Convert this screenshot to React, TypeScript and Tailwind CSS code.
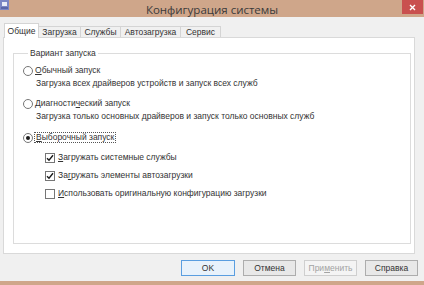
import React from "react";

function Radio({ checked }: { checked?: boolean }) {
  return (
    <span className="w-[10px] h-[10px] rounded-full border border-[#767676] bg-white flex items-center justify-center shrink-0">
      {checked && <span className="w-[4px] h-[4px] rounded-full bg-[#1a1a1a]" />}
    </span>
  );
}

function Check({ checked }: { checked?: boolean }) {
  return (
    <span className="w-[10px] h-[10px] border border-[#767676] bg-white flex items-center justify-center shrink-0">
      {checked && (
        <svg width="8" height="8" viewBox="0 0 8 8">
          <path d="M1 4.2 L3 6.2 L7 1.3" fill="none" stroke="#1a1a1a" strokeWidth="1.4" />
        </svg>
      )}
    </span>
  );
}

export default function App() {
  return (
    <div className="w-[424px] h-[285px] bg-[#f0f0f0] flex flex-col overflow-hidden font-['Liberation_Sans',Arial,sans-serif] text-[#333333]">
      {/* title bar */}
      <div className="h-[17px] bg-[#cfa68a] grid grid-cols-[22px_1fr_22px] shrink-0">
        <div className="flex items-start">
          <svg width="9" height="10" viewBox="0 0 9 10">
            <rect x="0" y="0" width="9" height="10" fill="#7b86c4" />
            <rect x="2" y="2" width="5" height="4" fill="#e9ecf7" />
            <rect x="1" y="7" width="7" height="2" fill="#5a66a8" />
          </svg>
        </div>
        <div className="text-center text-[11.5px] leading-[19px] text-[#3a3a3a] font-['Open_Sans',sans-serif]">
          Конфигурация системы
        </div>
        <div className="flex justify-end">
          <div className="w-[21px] h-[14px] bg-[#c9504f] flex items-center justify-center mr-[1px]">
            <svg width="7" height="7" viewBox="0 0 7 7">
              <path d="M1 1 L6 6 M6 1 L1 6" stroke="#ffffff" strokeWidth="1.4" />
            </svg>
          </div>
        </div>
      </div>

      {/* tabs */}
      <div className="flex items-end pl-[4px] pt-[6px] h-[20px] shrink-0 text-[8.5px]">
        <div className="relative z-10 w-[35px] h-[15px] -mb-px bg-white border border-b-0 border-[#d4d4d4] flex items-start justify-center pt-[1px] leading-[12px]">
          Общие
        </div>
        <div className="w-[43px] h-[11px] -ml-px bg-[#f0f0f0] border border-b-0 border-[#d4d4d4] flex items-center justify-center leading-[11px]">
          Загрузка
        </div>
        <div className="w-[41px] h-[11px] -ml-px bg-[#f0f0f0] border border-b-0 border-[#d4d4d4] flex items-center justify-center leading-[11px]">
          Службы
        </div>
        <div className="w-[61px] h-[11px] -ml-px bg-[#f0f0f0] border border-b-0 border-[#d4d4d4] flex items-center justify-center leading-[11px]">
          Автозагрузка
        </div>
        <div className="w-[41px] h-[11px] -ml-px bg-[#f0f0f0] border border-b-0 border-[#d4d4d4] flex items-center justify-center leading-[11px]">
          Сервис
        </div>
      </div>

      {/* panel */}
      <div className="ml-[3px] w-[412px] h-[217px] shrink-0 bg-white border border-[#d9d9d9] pl-[9px] pr-[3px] pt-[10px] text-[8.5px]">
        <fieldset className="border border-[#dcdcdc] h-[196px] px-[9px]">
          <legend className="ml-[5px] px-[2px] leading-[11px]">Вариант запуска</legend>

          <div className="mt-[5px] h-[13px] flex items-center gap-[2px]">
            <Radio />
            <span className="leading-[13px]"><span className="underline">О</span>бычный запуск</span>
          </div>
          <div className="h-[13px] flex items-center pl-[13px] leading-[13px]">
            Загрузка всех драйверов устройств и запуск всех служб
          </div>

          <div className="mt-[7px] h-[13px] flex items-center gap-[2px]">
            <Radio />
            <span className="leading-[13px]">Диагности<span className="underline">ч</span>еский запуск</span>
          </div>
          <div className="h-[13px] flex items-center pl-[13px] leading-[13px]">
            Загрузка только основных драйверов и запуск только основных служб
          </div>

          <div className="mt-[8px] h-[13px] flex items-center gap-[1px]">
            <Radio checked />
            <span className="leading-[9px] border border-dotted border-[#555] px-[1px]"><span className="underline">В</span>ыборочный запуск</span>
          </div>

          <div className="mt-[7px] h-[13px] flex items-center gap-[3px] pl-[22px]">
            <Check checked />
            <span className="leading-[13px]"><span className="underline">З</span>агружать системные службы</span>
          </div>
          <div className="mt-[5px] h-[13px] flex items-center gap-[3px] pl-[22px]">
            <Check checked />
            <span className="leading-[13px]">За<span className="underline">г</span>ружать элементы автозагрузки</span>
          </div>
          <div className="mt-[5px] h-[13px] flex items-center gap-[3px] pl-[22px]">
            <Check />
            <span className="leading-[13px]"><span className="underline">И</span>спользовать оригинальную конфигурацию загрузки</span>
          </div>
        </fieldset>
      </div>

      {/* buttons */}
      <div className="mt-[6px] h-[16px] flex justify-end gap-[8px] pr-[6px] text-[8.5px] shrink-0">
        <div className="w-[54px] h-[16px] border border-[#5a9ee0] bg-[#e8f2fb] flex items-center justify-center">OK</div>
        <div className="w-[53px] h-[16px] border border-[#adadad] bg-[#e8e8e8] flex items-center justify-center">Отмена</div>
        <div className="w-[53px] h-[16px] border border-[#cfcfcf] bg-[#f4f4f4] text-[#a3a3a3] flex items-center justify-center">
          <span>При<span className="underline">м</span>енить</span>
        </div>
        <div className="w-[53px] h-[16px] border border-[#adadad] bg-[#e8e8e8] flex items-center justify-center">Справка</div>
      </div>

      <div className="mt-auto h-[4px] bg-[#cfa68a] shrink-0" />
    </div>
  );
}
